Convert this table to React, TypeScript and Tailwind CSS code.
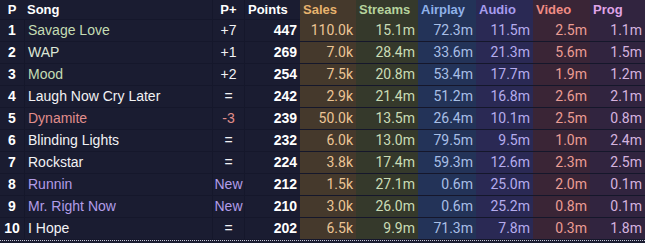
import React from 'react';

type Row = {
  p: number;
  song: string;
  change: string;
  points: number;
  sales: string;
  streams: string;
  airplay: string;
  audio: string;
  video: string;
  prog: string;
  tone: 'green' | 'pale' | 'white' | 'red' | 'purple';
};

const rows: Row[] = [
  { p: 1, song: 'Savage Love', change: '+7', points: 447, sales: '110.0k', streams: '15.1m', airplay: '72.3m', audio: '11.5m', video: '2.5m', prog: '1.1m', tone: 'green' },
  { p: 2, song: 'WAP', change: '+1', points: 269, sales: '7.0k', streams: '28.4m', airplay: '33.6m', audio: '21.3m', video: '5.6m', prog: '1.5m', tone: 'pale' },
  { p: 3, song: 'Mood', change: '+2', points: 254, sales: '7.5k', streams: '20.8m', airplay: '53.4m', audio: '17.7m', video: '1.9m', prog: '1.2m', tone: 'green' },
  { p: 4, song: 'Laugh Now Cry Later', change: '=', points: 242, sales: '2.9k', streams: '21.4m', airplay: '51.2m', audio: '16.8m', video: '2.6m', prog: '2.1m', tone: 'white' },
  { p: 5, song: 'Dynamite', change: '-3', points: 239, sales: '50.0k', streams: '13.5m', airplay: '26.4m', audio: '10.1m', video: '2.5m', prog: '0.8m', tone: 'red' },
  { p: 6, song: 'Blinding Lights', change: '=', points: 232, sales: '6.0k', streams: '13.0m', airplay: '79.5m', audio: '9.5m', video: '1.0m', prog: '2.4m', tone: 'white' },
  { p: 7, song: 'Rockstar', change: '=', points: 224, sales: '3.8k', streams: '17.4m', airplay: '59.3m', audio: '12.6m', video: '2.3m', prog: '2.5m', tone: 'white' },
  { p: 8, song: 'Runnin', change: 'New', points: 212, sales: '1.5k', streams: '27.1m', airplay: '0.6m', audio: '25.0m', video: '2.0m', prog: '0.1m', tone: 'purple' },
  { p: 9, song: 'Mr. Right Now', change: 'New', points: 210, sales: '3.0k', streams: '26.0m', airplay: '0.6m', audio: '25.2m', video: '0.8m', prog: '0.1m', tone: 'purple' },
  { p: 10, song: 'I Hope', change: '=', points: 202, sales: '6.5k', streams: '9.9m', airplay: '71.3m', audio: '7.8m', video: '0.3m', prog: '1.8m', tone: 'white' },
];

const toneClass = {
  green: 'text-[#c4dcb4]',
  pale: 'text-[#dde6d6]',
  white: 'text-[#f2f2f4]',
  red: 'text-[#e08e8c]',
  purple: 'text-[#b29ce8]',
};

// column widths measured off the screenshot
const grid = 'grid grid-cols-[24px_189px_32px_55px_56px_62px_58px_57px_57px_55px]';
const sans = "font-['Liberation_Sans',Arial,sans-serif]";
const num = "font-['Roboto',sans-serif]";

const App: React.FC = () => {
  return (
    <div className={`w-[645px] h-[243px] bg-[#1a1c31] overflow-hidden ${sans}`}>
      <div className={`${grid} h-[20px] items-center text-[13px] font-bold border-b border-[#15172b]`}>
        <div className="text-center text-white">P</div>
        <div className="pl-[3px] text-white border-r border-[#15172b] h-full flex items-center">Song</div>
        <div className="text-center text-white border-r border-[#15172b] h-full flex items-center justify-center">P+</div>
        <div className="pl-[3px] text-white h-full flex items-center">Points</div>
        <div className="pl-[3px] h-full flex items-center bg-[#45392c] text-[#e8b36e]">Sales</div>
        <div className="pl-[3px] h-full flex items-center bg-[#35392b] text-[#b6d39d]">Streams</div>
        <div className="pl-[3px] h-full flex items-center bg-[#233358] text-[#8fb1ea]">Airplay</div>
        <div className="pl-[3px] h-full flex items-center bg-[#2a2954] text-[#a79cee]">Audio</div>
        <div className="pl-[3px] h-full flex items-center bg-[#3a2536] text-[#f08c84]">Video</div>
        <div className="pl-[3px] h-full flex items-center bg-[#31243f] text-[#dfa3e6]">Prog</div>
      </div>
      {rows.map((r) => (
        <div key={r.p} className={`${grid} h-[22px] items-stretch border-b border-[#15172b]`}>
          <div className="flex items-center justify-center text-[14px] font-bold text-white">{r.p}</div>
          <div className={`flex items-center pl-[3px] text-[14px] border-x border-[#15172b] ${toneClass[r.tone]}`}>{r.song}</div>
          <div className={`flex items-center justify-center text-[14px] border-r border-[#15172b] ${toneClass[r.tone === 'green' || r.tone === 'pale' ? 'white' : r.tone]}`}>{r.change}</div>
          <div className="flex items-center justify-end pr-[3px] text-[14px] font-bold text-white">{r.points}</div>
          <div className={`flex items-center justify-end pr-[3px] text-[14px] ${num} bg-[#45392c] text-[#ecc596]`}>{r.sales}</div>
          <div className={`flex items-center justify-end pr-[3px] text-[14px] ${num} bg-[#35392b] text-[#cadcb6]`}>{r.streams}</div>
          <div className={`flex items-center justify-end pr-[3px] text-[14px] ${num} bg-[#233358] text-[#a8bfe6]`}>{r.airplay}</div>
          <div className={`flex items-center justify-end pr-[3px] text-[14px] ${num} bg-[#2a2954] text-[#b5aced]`}>{r.audio}</div>
          <div className={`flex items-center justify-end pr-[3px] text-[14px] ${num} bg-[#3a2536] text-[#ec9d94]`}>{r.video}</div>
          <div className={`flex items-center justify-end pr-[3px] text-[14px] ${num} bg-[#31243f] text-[#d5b3df]`}>{r.prog}</div>
        </div>
      ))}
      <div className="border-t border-dotted border-[#c8c8d8]" />
    </div>
  );
};

export default App;
